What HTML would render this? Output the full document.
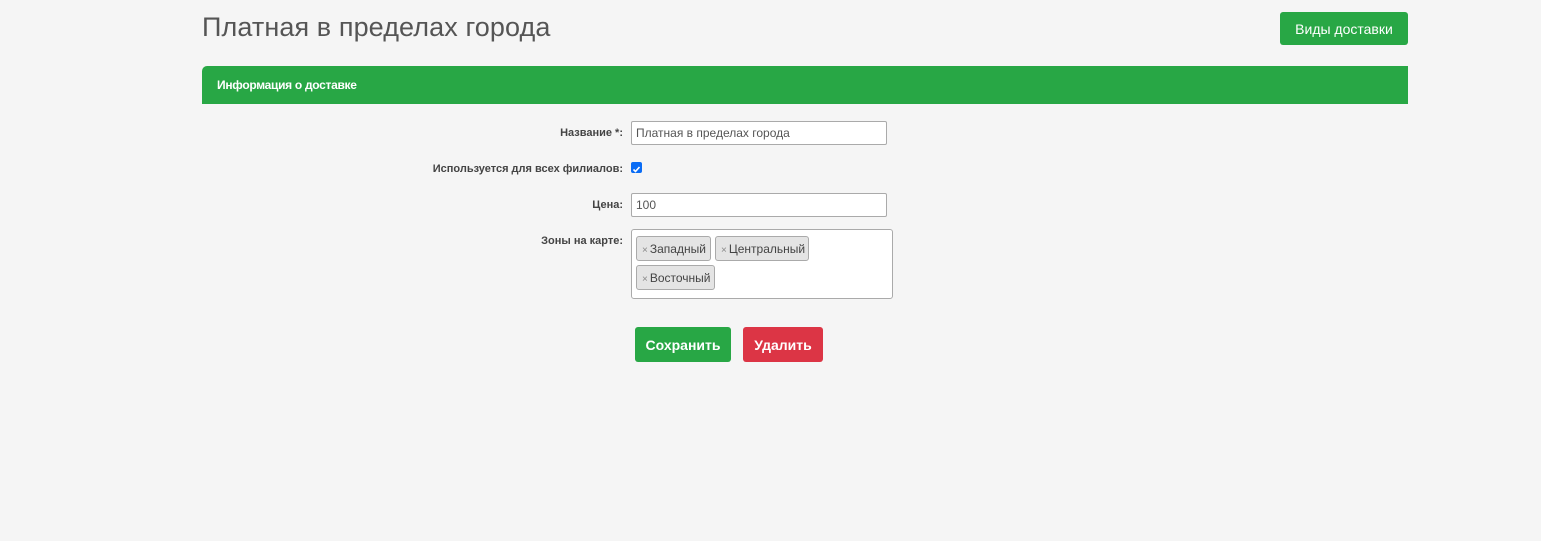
<!DOCTYPE html>
<html><head><meta charset="utf-8"><style>
*{box-sizing:border-box;margin:0;padding:0}
body{width:1541px;height:541px;background:#f5f5f5;font-family:"Liberation Sans",Arial,sans-serif;position:relative;overflow:hidden;color:#333}
.abs{position:absolute}
h1{position:absolute;left:202px;top:12px;font-weight:normal;font-size:27px;color:#555;letter-spacing:0.1px}
.btn{position:absolute;color:#fff;font-size:14px;font-weight:bold;display:flex;align-items:center;justify-content:center;border-radius:3px}
.g{background:#28a745}.r{background:#dc3545}
.bar{left:202px;top:66px;width:1206px;height:38px;background:#28a745;border-radius:5px 0 0 0;color:#fff;font-weight:bold;font-size:12px;padding:12px 0 0 15px;letter-spacing:-0.3px}
.lbl{position:absolute;right:918px;font-size:11px;font-weight:bold;color:#444}
.inp{position:absolute;left:631px;width:256px;height:24px;background:#fff;border:1px solid #aaa;border-radius:2px;font-size:12px;padding:4px 0 0 4px;color:#555}
.tag{position:absolute;height:25px;background:#e4e4e4;border:1px solid #aaa;border-radius:3px;font-size:12px;color:#444;padding:5px 0 0 5px}
.tag span{color:#888;font-size:10px;margin-right:2px}
</style></head><body>
<h1>Платная в пределах города</h1>
<div class="btn g" style="left:1280px;top:12px;width:128px;height:33px;font-weight:normal">Виды доставки</div>
<div class="abs bar">Информация о доставке</div>
<div class="lbl" style="top:127px">Название *:</div>
<div class="inp" style="top:121px">Платная в пределах города</div>
<div class="lbl" style="top:163px">Используется для всех филиалов:</div>
<div class="abs" style="left:631px;top:162px;width:11px;height:11px;background:#0a6cf5;border-radius:2px"><svg width="11" height="11" viewBox="0 0 11 11"><path d="M2.5 5.5L4.5 7.5L8.5 3" stroke="#fff" stroke-width="1.6" fill="none"/></svg></div>
<div class="lbl" style="top:199px">Цена:</div>
<div class="inp" style="top:193px">100</div>
<div class="lbl" style="top:235px">Зоны на карте:</div>
<div class="abs" style="left:631px;top:229px;width:262px;height:70px;background:#fff;border:1px solid #aaa;border-radius:3px"></div>
<div class="tag" style="left:636px;top:236px;width:75px"><span>×</span>Западный</div>
<div class="tag" style="left:715px;top:236px;width:94px"><span>×</span>Центральный</div>
<div class="tag" style="left:636px;top:265px;width:79px"><span>×</span>Восточный</div>
<div class="btn g" style="left:635px;top:327px;width:96px;height:35px">Сохранить</div>
<div class="btn r" style="left:743px;top:327px;width:80px;height:35px">Удалить</div>
</body></html>
